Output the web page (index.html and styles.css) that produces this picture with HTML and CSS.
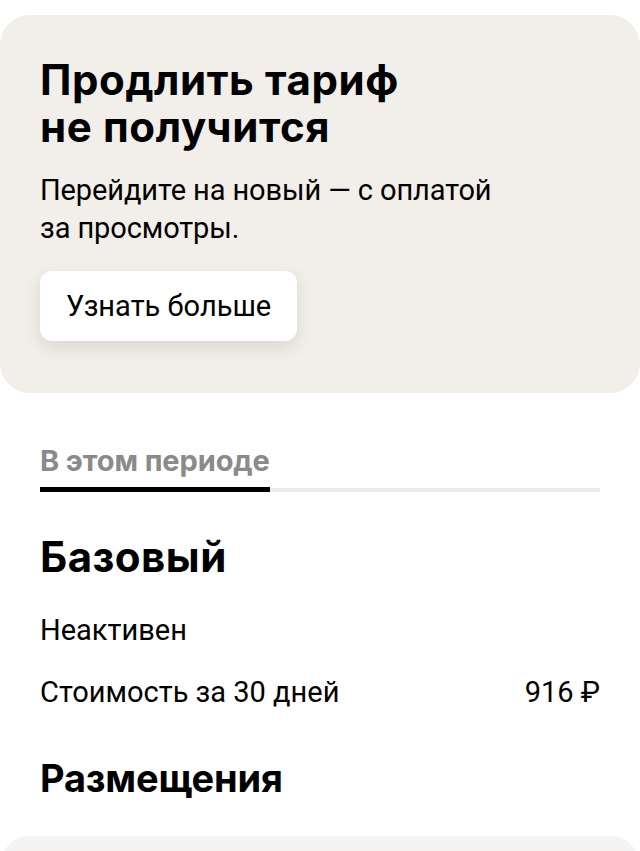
FILE: index.html
```html
<!DOCTYPE html>
<html lang="ru">
<head>
<meta charset="utf-8">
<link rel="stylesheet" href="styles.css">
</head>
<body>
<div class="page">
  <section class="promo">
    <h1 class="promo-title">Продлить тариф<br>не получится</h1>
    <p class="promo-text">Перейдите на новый — с оплатой<br>за просмотры.</p>
    <button class="promo-btn">Узнать больше</button>
  </section>

  <section class="content">
    <div class="tabs">
      <div class="tab tab-active">В этом периоде</div>
      <div class="tab-rest"></div>
    </div>

    <h2 class="plan-title">Базовый</h2>
    <div class="row row-first"><span>Неактивен</span></div>
    <div class="row row-next"><span>Стоимость за 30 дней</span><span>916 ₽</span></div>

    <h2 class="section-title">Размещения</h2>
  </section>

  <div class="bottom-card"></div>
</div>
</body>
</html>
```

FILE: styles.css
```css
* { box-sizing: border-box; }
html, body { margin: 0; padding: 0; background: #fff; }
body {
  font-family: Roboto, "Liberation Sans", sans-serif;
  color: #000;
  width: 640px;
  height: 851px;
  overflow: hidden;
}
.page {
  padding-top: 15px;
  display: flex;
  flex-direction: column;
}
.promo {
  background: #f2efea;
  border-radius: 30px;
  padding: 41px 40px 52px;
  display: flex;
  flex-direction: column;
  align-items: flex-start;
}
.promo-title {
  margin: 0;
  font-family: Inter, "Liberation Sans", sans-serif;
  font-weight: 700;
  font-size: 42px;
  line-height: 47px;
  letter-spacing: 0.6px;
}
.promo-text {
  margin: 21px 0 0;
  font-size: 29px;
  line-height: 38px;
  font-weight: 400;
  letter-spacing: -0.1px;
}
.promo-btn {
  margin-top: 24px;
  border: none;
  background: #fff;
  border-radius: 12px;
  height: 70px;
  padding: 0 26px;
  font-family: Roboto, "Liberation Sans", sans-serif;
  font-size: 29px;
  color: #000;
  box-shadow: 0 6px 18px rgba(60, 45, 20, 0.13);
}
.content {
  padding: 51px 40px 0;
  display: flex;
  flex-direction: column;
}
.tabs {
  display: flex;
  align-items: flex-end;
}
.tab {
  font-family: Inter, "Liberation Sans", sans-serif;
  font-weight: 700;
  font-size: 29px;
  line-height: 34px;
  color: #8a8a8a;
  padding-bottom: 9px;
  border-bottom: 5px solid #000;
  letter-spacing: -0.1px;
}
.tab-rest {
  flex: 1;
  height: 4px;
  background: #ececec;
}
.plan-title {
  margin: 41px 0 0;
  font-family: Inter, "Liberation Sans", sans-serif;
  font-weight: 700;
  font-size: 42px;
  line-height: 48px;
  letter-spacing: 0.5px;
}
.row {
  display: flex;
  justify-content: space-between;
  font-size: 29px;
  line-height: 34px;
}
.row-first { margin-top: 32px; }
.row-next { margin-top: 28px; }
.section-title {
  margin: 47px 0 0;
  font-family: Inter, "Liberation Sans", sans-serif;
  font-weight: 700;
  font-size: 38px;
  line-height: 44px;
  letter-spacing: -0.2px;
}
.bottom-card {
  margin-top: 36px;
  height: 80px;
  background: #f5f4f2;
  border-radius: 30px;
}
```
